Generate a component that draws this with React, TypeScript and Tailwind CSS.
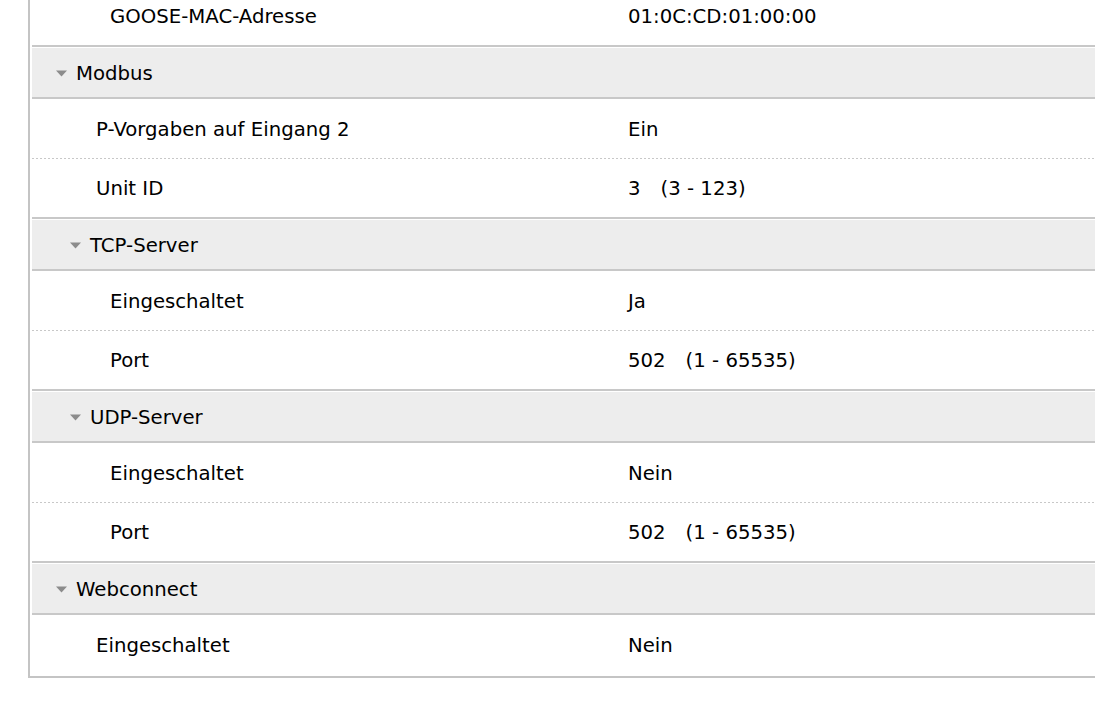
import React from "react";

type Row =
  | { kind: "group"; label: string; level: number }
  | { kind: "item"; label: string; value: string; range?: string; indent: number; sep: "solid" | "dotted" | "none" };

const rows: Row[] = [
  { kind: "item", label: "GOOSE-MAC-Adresse", value: "01:0C:CD:01:00:00", indent: 110, sep: "solid" },
  { kind: "group", label: "Modbus", level: 0 },
  { kind: "item", label: "P-Vorgaben auf Eingang 2", value: "Ein", indent: 96, sep: "dotted" },
  { kind: "item", label: "Unit ID", value: "3", range: "(3 - 123)", indent: 96, sep: "solid" },
  { kind: "group", label: "TCP-Server", level: 1 },
  { kind: "item", label: "Eingeschaltet", value: "Ja", indent: 110, sep: "dotted" },
  { kind: "item", label: "Port", value: "502", range: "(1 - 65535)", indent: 110, sep: "solid" },
  { kind: "group", label: "UDP-Server", level: 1 },
  { kind: "item", label: "Eingeschaltet", value: "Nein", indent: 110, sep: "dotted" },
  { kind: "item", label: "Port", value: "502", range: "(1 - 65535)", indent: 110, sep: "solid" },
  { kind: "group", label: "Webconnect", level: 0 },
  { kind: "item", label: "Eingeschaltet", value: "Nein", indent: 96, sep: "none" },
];

function Caret() {
  return (
    <svg width="11" height="7" viewBox="0 0 11 7" className="mr-[9px] shrink-0">
      <polygon points="0,0.5 11,0.5 5.5,6.5" fill="#8c8c8c" />
    </svg>
  );
}

export default function App() {
  return (
    <div
      className="w-[1095px] h-[701px] overflow-hidden bg-white text-[19.7px] text-black"
      style={{ fontFamily: '"DejaVu Sans", Verdana, sans-serif' }}
    >
      <div className="ml-[28px] -mt-[13px] border-l-2 border-b-2 border-[#c4c4c4] pl-[2px] pb-[1px]">
        {rows.map((row, i) =>
          row.kind === "group" ? (
            <div
              key={i}
              className="h-[52px] flex items-center pt-[2px] bg-[#ededed] border-t border-white border-b-2 border-b-[#c8c8c8]"
              style={{ paddingLeft: row.level === 0 ? 24 : 38 }}
            >
              <Caret />
              <span>{row.label}</span>
            </div>
          ) : (
            <div key={i} className="h-[60px] flex flex-col">
              <div className="flex-1 flex items-center pt-[2px]">
                <span className="shrink-0" style={{ marginLeft: row.indent - 32, width: 628 - row.indent }}>
                  {row.label}
                </span>
                <span>{row.value}</span>
                {row.range && <span className="ml-[20px]">{row.range}</span>}
              </div>
              {row.sep === "solid" && <div className="h-[2px] bg-[#c8c8c8]" />}
              {row.sep === "dotted" && (
                <div className="h-px bg-[linear-gradient(to_right,#c8c8c8_50%,transparent_50%)] bg-[length:4px_1px] bg-repeat-x" />
              )}
            </div>
          )
        )}
      </div>
    </div>
  );
}
